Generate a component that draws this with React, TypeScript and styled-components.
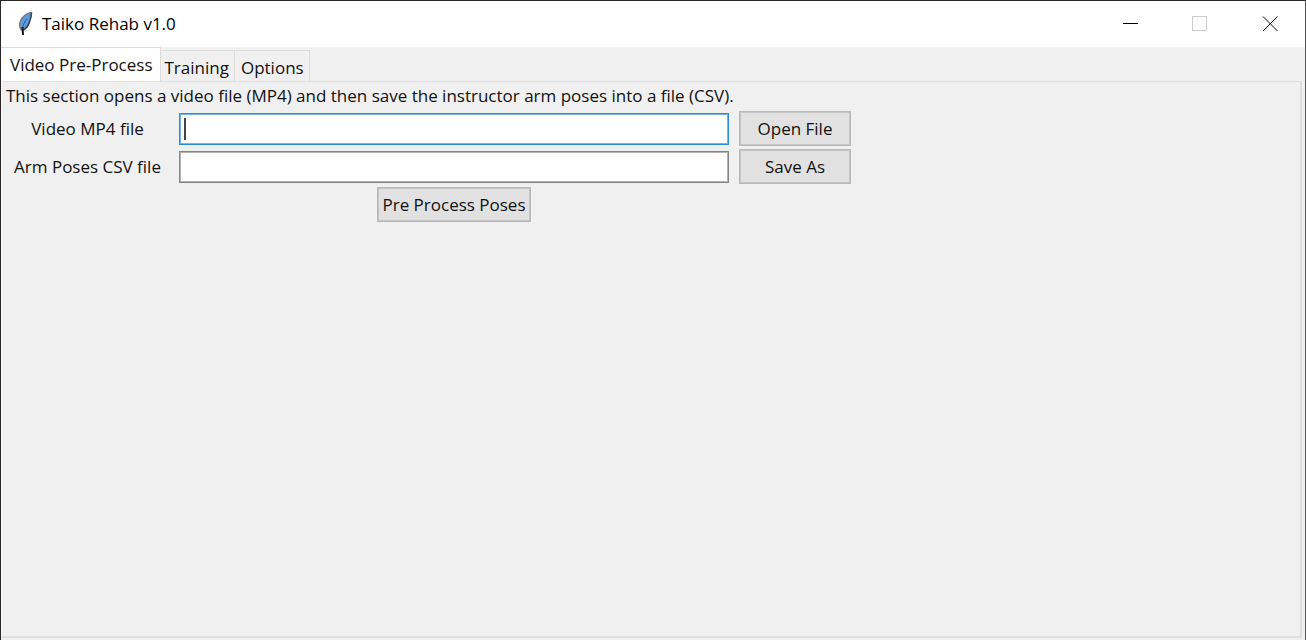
import React, { useState } from "react";
import styled, { createGlobalStyle } from "styled-components";

const GlobalStyle = createGlobalStyle`
  *, *::before, *::after { box-sizing: border-box; }
  body {
    margin: 0;
    background: #f0f0f0;
    color: #111;
    font: 17px/24px "Segoe UI", "Open Sans", "Noto Sans", sans-serif;
  }
  button, input { font: inherit; color: inherit; }
`;

const Window = styled.div`
  min-height: 100vh;
  display: flex;
  flex-direction: column;
  border: 1px solid #2b2729;
  border-right-color: #555;
  border-bottom: 0;
`;

const TitleBar = styled.header`
  height: 46px;
  flex: none;
  display: flex;
  align-items: center;
  padding-left: 16px;
  background: #fff;
`;

const Title = styled.h1`
  flex: 1;
  margin: 0 0 0 9px;
  font-size: 17px;
  font-weight: 400;
  color: #000;
`;

const WindowButton = styled.button`
  width: 70px;
  height: 46px;
  padding: 0;
  border: 0;
  background: transparent;
  display: grid;
  place-items: center;
`;

const TabList = styled.div`
  display: flex;
  align-items: flex-end;
  height: 34px;
  flex: none;
`;

const Tab = styled.button<{ $active: boolean }>`
  height: ${(p) => (p.$active ? 34 : 31)}px;
  padding: ${(p) => (p.$active ? "1px 7px 0 9px" : "3px 5px 0 4px")};
  border: 1px solid #dcdcdc;
  border-width: 1px 1px 0 0;
  background: ${(p) => (p.$active ? "#fff" : "#f0f0f0")};
  white-space: nowrap;

  &:last-child {
    padding-left: 6px;
  }
`;

const Pane = styled.main`
  flex: 1;
  margin: 0 3px 2px 0;
  border: 2px solid #dfdfdf;
  border-left: 1px solid #f8f8f8;
  border-top-width: 1px;
  padding: 2px 4px;
`;

const Description = styled.p`
  margin: 0 0 3px;
`;

const Form = styled.form`
  display: grid;
  grid-template-columns: 163px minmax(200px, 550px) 112px;
  column-gap: 10px;
  row-gap: 3px;
  align-items: center;
`;

const Label = styled.label`
  text-align: center;
  white-space: nowrap;
`;

const PathInput = styled.input<{ $active?: boolean }>`
  width: 100%;
  height: 32px;
  padding: 0 6px;
  outline: none;
  border: 1px solid ${(p) => (p.$active ? "#2a8bdc" : "#858585")};
  box-shadow: inset 0 0 0 1px ${(p) => (p.$active ? "#76b5ea" : "#b4b4b4")};
  background: #fff;
  ${(p) =>
    p.$active &&
    "background: linear-gradient(#444, #444) 4px 4px / 2px 22px no-repeat #fff;"}
`;

const Button = styled.button`
  height: 35px;
  padding: 0 4px;
  border: 1px solid #b8b8b8;
  box-shadow: inset 0 0 0 1px #c4c4c4;
  background: #e1e1e1;
  white-space: nowrap;
`;

const ProcessButton = styled(Button)`
  grid-column: 2;
  justify-self: center;
`;

const Feather = () => (
  <svg width="16" height="24" viewBox="0 0 16 24" aria-hidden="true">
    <path d="M14.5 .5C10 1 5 4.500 3.500 9C2 13 2.500 16 4.500 18.500C9 16.500 12 13 12.800 9C14 6 14.500 3 14.500 .5Z" fill="#5a9ae0" />
    <path d="M14.5 .5C10 1 5 4.500 3.500 9C2 13 2.500 16 4.500 18.500" fill="none" stroke="#777d82" strokeWidth="1.500" />
    <path d="M14.500 .5C14.500 3 14 6 12.800 9C12 13 9 16.500 6 18.500" fill="none" stroke="#3a4046" strokeWidth="1.500" />
    <path d="M10 6.500C7.500 10 6 13 5.800 16" fill="none" stroke="#2f5f97" strokeWidth="1" />
    <path d="M5.500 15L6 23" fill="none" stroke="#15191e" strokeWidth="2" />
  </svg>
);

const tabs = ["Video Pre-Process", "Training", "Options"];

export default function App() {
  const [tab, setTab] = useState(0);
  return (
    <>
      <GlobalStyle />
      <Window>
        <TitleBar>
          <Feather />
          <Title>Taiko Rehab v1.0</Title>
          <WindowButton aria-label="Minimize">
            <svg width="16" height="16" stroke="#000" shapeRendering="crispEdges"><path d="M1 7.500H16" /></svg>
          </WindowButton>
          <WindowButton aria-label="Maximize" disabled>
            <svg width="16" height="16" stroke="#ccc" fill="none" shapeRendering="crispEdges"><path d="M.5 .5H14.500V14.500H.5Z" /></svg>
          </WindowButton>
          <WindowButton aria-label="Close">
            <svg width="16" height="16" stroke="#000" strokeWidth="1"><path d="M1 .5L15.500 15M15.500 .5L1 15" /></svg>
          </WindowButton>
        </TitleBar>
        <TabList role="tablist">
          {tabs.map((name, i) => (
            <Tab key={name} role="tab" aria-selected={tab === i} $active={tab === i} onClick={() => setTab(i)}>
              {name}
            </Tab>
          ))}
        </TabList>
        <Pane role="tabpanel">
          <Description>
            This section opens a video file (MP4) and then save the instructor arm poses into a file (CSV).
          </Description>
          <Form onSubmit={(e) => e.preventDefault()}>
            <Label htmlFor="video">Video MP4 file</Label>
            <PathInput id="video" type="text" $active />
            <Button type="button">Open File</Button>
            <Label htmlFor="poses">Arm Poses CSV file</Label>
            <PathInput id="poses" type="text" />
            <Button type="button">Save As</Button>
            <ProcessButton type="submit">Pre Process Poses</ProcessButton>
          </Form>
        </Pane>
      </Window>
    </>
  );
}
